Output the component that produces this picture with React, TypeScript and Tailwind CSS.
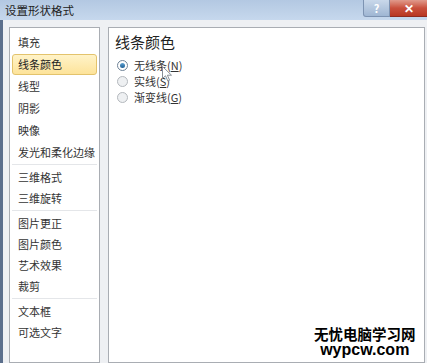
const font = { fontFamily: '"Noto Sans CJK SC", "Liberation Sans", sans-serif' };

type Group = { rowH: string; items: string[] };

const groups: Group[] = [
  { rowH: 'h-[22px]', items: ['填充', '线条颜色', '线型', '阴影', '映像', '发光和柔化边缘'] },
  { rowH: 'h-[21px]', items: ['三维格式', '三维旋转'] },
  { rowH: 'h-[21px]', items: ['图片更正', '图片颜色', '艺术效果', '裁剪'] },
  { rowH: 'h-[20.5px]', items: ['文本框', '可选文字'] },
];

const Radio = ({ checked }: { checked?: boolean }) => (
  <span
    className={`flex h-[11px] w-[11px] items-center justify-center rounded-full border ${
      checked ? 'border-[#6f8397] bg-white' : 'border-[#b4b8bd] bg-[#eef0f2]'
    }`}
  >
    {checked && (
      <span className="h-[5px] w-[5px] rounded-full bg-gradient-to-b from-[#5fa3d3] to-[#1d5e93]" />
    )}
  </span>
);

const options = [
  { label: '无线条', key: 'N', checked: true },
  { label: '实线', key: 'S' },
  { label: '渐变线', key: 'G' },
];

export default function App() {
  return (
    <div className="relative flex h-[363px] w-[427px] flex-col overflow-hidden bg-[#eef0f3]" style={font}>
      {/* title bar */}
      <div className="flex h-[20px] items-start bg-gradient-to-b from-[#b3c8e2] to-[#c6d8ed]">
        <span className="ml-[5px] mt-[3px] text-[11.5px] leading-[15px] text-[#222]">设置形状格式</span>
        <div className="ml-auto flex h-[17px]">
          <div className="flex w-[27px] items-center justify-center rounded-bl-[3px] border border-t-0 border-[#7d93b2] bg-gradient-to-b from-[#c9d8ea] to-[#9fb6d3] text-[11px] font-bold text-white">
            ?
          </div>
          <div className="flex w-[37px] items-center justify-center border-b border-[#8e2b20] bg-gradient-to-b from-[#e09a8c] via-[#c9503d] to-[#b83722] text-[12px] font-bold text-white">
            ✕
          </div>
        </div>
      </div>

      {/* body */}
      <div className="flex flex-1 border-l-[3px] border-[#5b6f8c] pl-[6px] pr-[2px] pt-[7px]">
        <div className="flex w-[91px] flex-col border border-[#a9adb3] bg-white px-[2px] pt-[3px]">
          {groups.map((g, gi) => (
            <div key={gi} className={gi > 0 ? 'mt-[1px] border-t border-[#e4e6e9] pt-[2px]' : ''}>
              {g.items.map((item) => (
                <div key={item} className={`flex items-center ${g.rowH}`}>
                  {item === '线条颜色' ? (
                    <div className="flex h-[21px] w-full items-center rounded-[3px] border border-[#e3c36c] bg-gradient-to-b from-[#fff3c8] to-[#fde39a] pl-[5px] text-[11px] text-[#222]">
                      {item}
                    </div>
                  ) : (
                    <span className="pl-[6px] text-[11px] text-[#333]">{item}</span>
                  )}
                </div>
              ))}
            </div>
          ))}
        </div>

        <div className="ml-[8px] flex flex-1 flex-col border border-[#a9adb3] bg-white pl-[6px] pt-[4px]">
          <div className="text-[15px] leading-[20px] text-[#222]">线条颜色</div>
          <div className="mt-[5px] flex flex-col pl-[2px]">
            {options.map((o) => (
              <div key={o.key} className="flex h-[16px] items-center gap-[6px]">
                <Radio checked={o.checked} />
                <span className="text-[11px] text-[#333]">
                  {o.label}(<span className="underline">{o.key}</span>)
                </span>
              </div>
            ))}
          </div>
        </div>
      </div>

      {/* mouse cursor */}
      <svg className="absolute left-[162px] top-[66px]" width="11" height="16" viewBox="0 0 11 16">
        <path d="M0.5 0.5 L0.5 12.5 L3.5 9.8 L5.8 15 L7.6 14.2 L5.4 9.2 L9.5 9.2 Z" fill="#fff" stroke="#8a8f96" strokeWidth="1" />
      </svg>

      {/* watermark */}
      <div className="absolute left-[314px] top-[326px] flex flex-col items-center">
        <span className="h-[16px] text-[14.5px] font-bold leading-[16px] text-black">无忧电脑学习网</span>
        <span
          className="mt-[1px] h-[14px] text-[16px] font-bold leading-[14px] text-black"
          style={{ fontFamily: '"Liberation Sans", sans-serif' }}
        >
          wypcw.com
        </span>
      </div>
    </div>
  );
}
